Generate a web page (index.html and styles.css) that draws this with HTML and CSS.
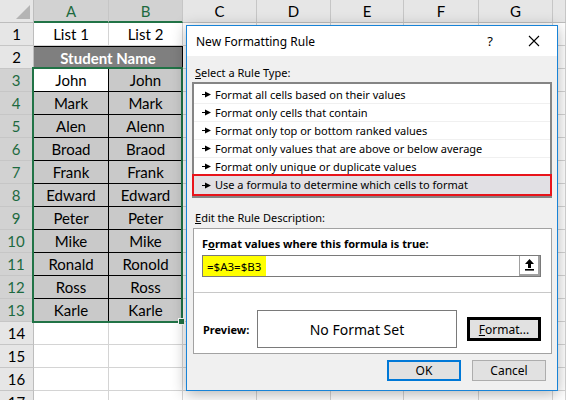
FILE: index.html
```html
<!DOCTYPE html>
<html lang="en">
<head>
    <meta charset="UTF-8">
    <title>New Formatting Rule</title>
    <link rel="stylesheet" href="styles.css">
</head>
<body>
    <div class="sheet">
        <div class="corner"><span class="tri"></span></div>
        <div class="ch sel">A</div>
        <div class="ch sel">B</div>
        <div class="ch">C</div>
        <div class="ch">D</div>
        <div class="ch">E</div>
        <div class="ch">F</div>
        <div class="ch">G</div>
        <div class="ch"></div>

        <div class="rh">1</div>
        <div class="cell">List 1</div>
        <div class="cell">List 2</div>
        <div class="cell"></div><div class="cell"></div><div class="cell"></div><div class="cell"></div><div class="cell"></div><div class="cell"></div>

        <div class="rh">2</div>
        <div class="cell title-cell">Student Name</div>
        <div class="cell"></div><div class="cell"></div><div class="cell"></div><div class="cell"></div><div class="cell"></div><div class="cell"></div>

        <div class="rh sel">3</div>
        <div class="cell data active">John</div>
        <div class="cell data">John</div>
        <div class="cell"></div><div class="cell"></div><div class="cell"></div><div class="cell"></div><div class="cell"></div><div class="cell"></div>

        <div class="rh sel">4</div>
        <div class="cell data">Mark</div>
        <div class="cell data">Mark</div>
        <div class="cell"></div><div class="cell"></div><div class="cell"></div><div class="cell"></div><div class="cell"></div><div class="cell"></div>

        <div class="rh sel">5</div>
        <div class="cell data">Alen</div>
        <div class="cell data">Alenn</div>
        <div class="cell"></div><div class="cell"></div><div class="cell"></div><div class="cell"></div><div class="cell"></div><div class="cell"></div>

        <div class="rh sel">6</div>
        <div class="cell data">Broad</div>
        <div class="cell data">Braod</div>
        <div class="cell"></div><div class="cell"></div><div class="cell"></div><div class="cell"></div><div class="cell"></div><div class="cell"></div>

        <div class="rh sel">7</div>
        <div class="cell data">Frank</div>
        <div class="cell data">Frank</div>
        <div class="cell"></div><div class="cell"></div><div class="cell"></div><div class="cell"></div><div class="cell"></div><div class="cell"></div>

        <div class="rh sel">8</div>
        <div class="cell data">Edward</div>
        <div class="cell data">Edward</div>
        <div class="cell"></div><div class="cell"></div><div class="cell"></div><div class="cell"></div><div class="cell"></div><div class="cell"></div>

        <div class="rh sel">9</div>
        <div class="cell data">Peter</div>
        <div class="cell data">Peter</div>
        <div class="cell"></div><div class="cell"></div><div class="cell"></div><div class="cell"></div><div class="cell"></div><div class="cell"></div>

        <div class="rh sel">10</div>
        <div class="cell data">Mike</div>
        <div class="cell data">Mike</div>
        <div class="cell"></div><div class="cell"></div><div class="cell"></div><div class="cell"></div><div class="cell"></div><div class="cell"></div>

        <div class="rh sel">11</div>
        <div class="cell data">Ronald</div>
        <div class="cell data">Ronold</div>
        <div class="cell"></div><div class="cell"></div><div class="cell"></div><div class="cell"></div><div class="cell"></div><div class="cell"></div>

        <div class="rh sel">12</div>
        <div class="cell data">Ross</div>
        <div class="cell data">Ross</div>
        <div class="cell"></div><div class="cell"></div><div class="cell"></div><div class="cell"></div><div class="cell"></div><div class="cell"></div>

        <div class="rh sel">13</div>
        <div class="cell data">Karle</div>
        <div class="cell data">Karle</div>
        <div class="cell"></div><div class="cell"></div><div class="cell"></div><div class="cell"></div><div class="cell"></div><div class="cell"></div>

        <div class="rh">14</div>
        <div class="cell"></div><div class="cell"></div><div class="cell"></div><div class="cell"></div><div class="cell"></div><div class="cell"></div><div class="cell"></div><div class="cell"></div>

        <div class="rh">15</div>
        <div class="cell"></div><div class="cell"></div><div class="cell"></div><div class="cell"></div><div class="cell"></div><div class="cell"></div><div class="cell"></div><div class="cell"></div>

        <div class="rh">16</div>
        <div class="cell"></div><div class="cell"></div><div class="cell"></div><div class="cell"></div><div class="cell"></div><div class="cell"></div><div class="cell"></div><div class="cell"></div>

        <div class="rh">17</div>
        <div class="cell"></div><div class="cell"></div><div class="cell"></div><div class="cell"></div><div class="cell"></div><div class="cell"></div><div class="cell"></div><div class="cell"></div>
    </div>

    <!-- selected range A3:B13 -->
    <div class="selection"><span class="handle"></span></div>

    <div class="dialog">
        <div class="titlebar">
            <span class="title">New Formatting Rule</span>
            <span class="help">?</span>
            <svg class="close" width="12" height="12" viewBox="0 0 12 12">
                <path d="M1 1 L11 11 M11 1 L1 11" stroke="#000" stroke-width="1.1" fill="none"/>
            </svg>
        </div>
        <div class="dlg-body">
            <div class="section-label"><u>S</u>elect a Rule Type:</div>
            <ul class="rule-list">
                <li><svg class="bullet" width="9" height="7" viewBox="0 0 9 7"><path d="M0 3h4v1H0z M3 0.5 L9 3.5 L3 6.5z" fill="#000"/></svg>Format all cells based on their values</li>
                <li><svg class="bullet" width="9" height="7" viewBox="0 0 9 7"><path d="M0 3h4v1H0z M3 0.5 L9 3.5 L3 6.5z" fill="#000"/></svg>Format only cells that contain</li>
                <li><svg class="bullet" width="9" height="7" viewBox="0 0 9 7"><path d="M0 3h4v1H0z M3 0.5 L9 3.5 L3 6.5z" fill="#000"/></svg>Format only top or bottom ranked values</li>
                <li><svg class="bullet" width="9" height="7" viewBox="0 0 9 7"><path d="M0 3h4v1H0z M3 0.5 L9 3.5 L3 6.5z" fill="#000"/></svg>Format only values that are above or below average</li>
                <li><svg class="bullet" width="9" height="7" viewBox="0 0 9 7"><path d="M0 3h4v1H0z M3 0.5 L9 3.5 L3 6.5z" fill="#000"/></svg>Format only unique or duplicate values</li>
                <li class="active"><svg class="bullet" width="9" height="7" viewBox="0 0 9 7"><path d="M0 3h4v1H0z M3 0.5 L9 3.5 L3 6.5z" fill="#000"/></svg>Use a formula to determine which cells to format</li>
            </ul>

            <div class="section-label second"><u>E</u>dit the Rule Description:</div>
            <div class="desc">
                <div class="desc-top">
                    <div class="desc-label">F<u>o</u>rmat values where this formula is true:</div>
                    <div class="formula">
                        <span class="formula-text">=$A3=$B3</span>
                        <span class="ref-btn">
                            <svg width="11" height="12" viewBox="0 0 11 12">
                                <path d="M5.5 0 L10 5 H7 V9 H4 V5 H1z" fill="#000"/>
                                <rect x="1" y="10" width="9" height="1.6" fill="#000"/>
                            </svg>
                        </span>
                    </div>
                </div>
                <div class="preview-row">
                    <span class="preview-label">Preview:</span>
                    <div class="preview-box">No Format Set</div>
                    <span class="btn fmt"><u>F</u>ormat...</span>
                </div>
            </div>

            <div class="actions">
                <span class="btn ok">OK</span>
                <span class="btn">Cancel</span>
            </div>
        </div>
    </div>
</body>
</html>
```

FILE: styles.css
```css
body {
    margin: 0;
    width: 566px;
    height: 400px;
    overflow: hidden;
    position: relative;
    background-color: #fff;
    font-family: Lato, "Liberation Sans", sans-serif;
}
.sheet {
    display: grid;
    grid-template-columns: 34px 75px 74px 74px 74px 73px 75px 74px 1fr;
    grid-auto-rows: 23px;
    font-size: 15px;
    color: #000;
}
.sheet > div {
    box-sizing: border-box;
    border-right: 1px solid #d4d4d4;
    border-bottom: 1px solid #d4d4d4;
    display: flex;
    align-items: center;
    justify-content: center;
}
.corner {
    background-color: #e6e6e6;
    position: relative;
    border-right-color: #bdbdbd !important;
    border-bottom-color: #bdbdbd !important;
}
.tri {
    position: absolute;
    right: 3px;
    bottom: 3px;
    width: 0;
    height: 0;
    border-left: 14px solid transparent;
    border-bottom: 14px solid #b4b4b4;
}
.ch {
    background-color: #e6e6e6;
    border-right-color: #c6c6c6 !important;
    border-bottom-color: #bdbdbd !important;
}
.ch.sel {
    background-color: #d2d2d2;
    color: #1d6a3f;
    border-bottom: 2px solid #217346 !important;
}
.rh {
    background-color: #e6e6e6;
    border-right-color: #bdbdbd !important;
    border-bottom-color: #c6c6c6 !important;
}
.rh.sel {
    background-color: #d2d2d2;
    color: #1d6a3f;
    border-right: 2px solid #217346 !important;
}
.title-cell {
    grid-column: span 2;
    background-color: #7f7f7f;
    color: #fff;
    font-weight: bold;
    border: 1px solid #000 !important;
    border-left: none !important;
}
.cell.data {
    background-color: #c9c9c9;
    border-right-color: #000 !important;
    border-bottom-color: #000 !important;
}
.cell.data.active {
    background-color: #fff;
}
.selection {
    position: absolute;
    left: 32px;
    top: 67px;
    width: 151px;
    height: 256px;
    box-sizing: border-box;
    border: 2px solid #217346;
}
.handle {
    position: absolute;
    right: -4px;
    bottom: -4px;
    width: 5px;
    height: 5px;
    background-color: #217346;
    border: 1px solid #fff;
}

/* dialog */
.dialog {
    position: absolute;
    left: 186px;
    top: 25px;
    width: 372px;
    height: 366px;
    box-sizing: border-box;
    border: 1px solid #1883d7;
    background-color: #f0f0f0;
    box-shadow: 0 3px 14px rgba(0,0,0,0.3);
    font-family: "Noto Sans", sans-serif;
    font-size: 11px;
    color: #000;
}
.titlebar {
    height: 30px;
    background-color: #fff;
    display: flex;
    align-items: center;
    padding-left: 9px;
    font-size: 12px;
}
.title {
    flex: 1;
}
.help {
    margin-right: 35px;
    font-size: 13px;
}
.close {
    margin-right: 17px;
}
.dlg-body {
    padding: 9px 5px 0 5px;
}
.section-label {
    line-height: 16px;
    padding-left: 3px;
}
.section-label.second {
    margin-top: 12px;
}
.rule-list {
    list-style: none;
    margin: 1px 0 0 0;
    padding: 2px 0;
    border: 2px solid #858585;
    background-color: #fff;
}
.rule-list li {
    height: 18px;
    line-height: 18px;
    padding-left: 8px;
    display: flex;
    align-items: center;
    box-sizing: border-box;
    border-bottom: 1px solid #f0f0f0;
}
.rule-list li.active {
    background-color: #e1e0e4;
    outline: 2px solid #e8141b;
    outline-offset: 0;
    border-bottom: none;
}
.bullet {
    margin-right: 4px;
}
.desc {
    margin: 2px 0 0 1px;
    border: 1px solid #a2a2a2;
    background-color: #fff;
}
.desc-top {
    padding: 7px 10px 15px 8px;
    border-bottom: 1px solid #c8c8c8;
}
.desc-label {
    font-weight: bold;
    line-height: 16px;
}
.formula {
    margin-top: 3px;
    height: 22px;
    box-sizing: border-box;
    border: 1px solid #7a7a7a;
    display: flex;
    align-items: stretch;
}
.formula-text {
    background-color: #ffff00;
    padding: 0 5px 0 4px;
    display: flex;
    align-items: center;
    font-size: 11.5px;
}
.ref-btn {
    margin-left: auto;
    width: 21px;
    box-sizing: border-box;
    border-left: 1px solid #a0a0a0;
    border-right: 2px solid #a0a0a0;
    border-bottom: 2px solid #a0a0a0;
    display: flex;
    align-items: center;
    justify-content: center;
}
.preview-row {
    display: flex;
    align-items: center;
    padding: 17px 0 5px 9px;
}
.preview-label {
    font-weight: bold;
    width: 54px;
}
.preview-box {
    width: 200px;
    height: 38px;
    box-sizing: border-box;
    border: 1px solid #7a7a7a;
    display: flex;
    align-items: center;
    justify-content: center;
    font-size: 14px;
}
.btn {
    display: flex;
    align-items: center;
    justify-content: center;
    width: 74px;
    height: 21px;
    box-sizing: border-box;
    background-color: #e1e1e1;
    border: 1px solid #adadad;
    font-size: 12px;
}
.btn.fmt {
    margin-left: 10px;
    height: 24px;
    border: 3px solid #000;
}
.actions {
    display: flex;
    justify-content: flex-end;
    gap: 11px;
    margin-top: 6px;
    padding-right: 6px;
}
.btn.ok {
    border: 2px solid #0078d7;
}
```
